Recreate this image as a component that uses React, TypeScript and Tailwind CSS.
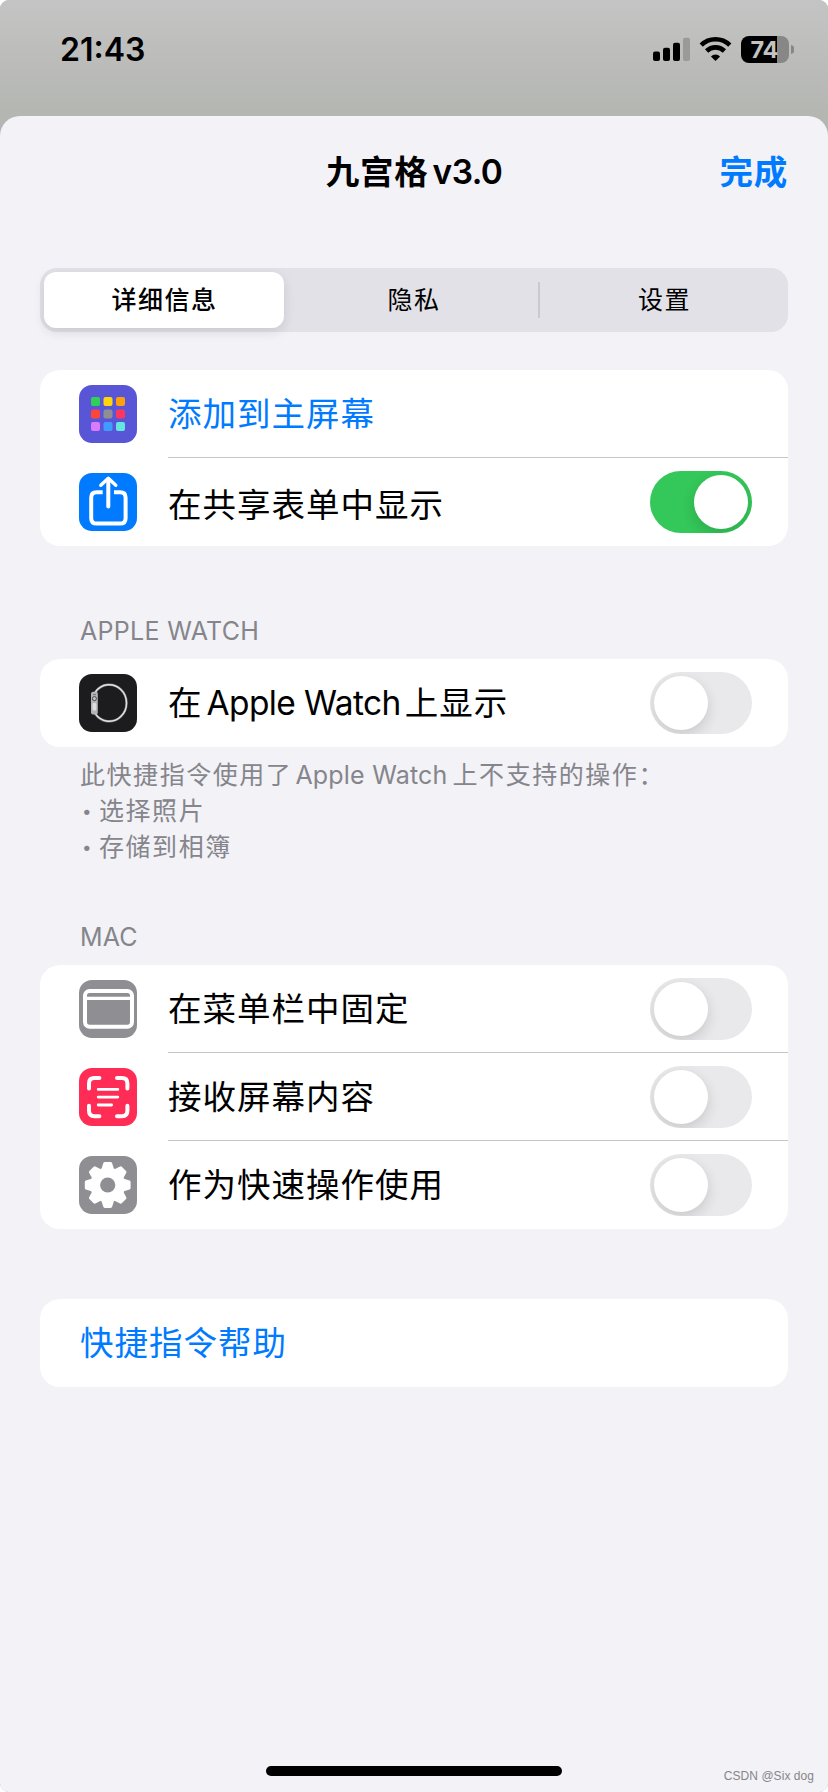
import React from "react";

const CJK = "font-['Inter','Noto_Sans_CJK_SC',sans-serif]";

function StatusBar() {
  return (
    <div className="flex h-[116px] items-start bg-linear-to-b from-[#c4c4c4] to-[#b4b6b2] pt-[36px] pl-[60px] pr-[34px]">
      <div className="mt-[-4px] text-[32px] leading-[36px] font-semibold tracking-[0px] text-black">21:43</div>
      <svg className="ml-auto" width="142" height="28" viewBox="0 0 142 28">
        <rect x="1" y="15.5" width="7" height="9.5" rx="2" />
        <rect x="11" y="11.7" width="7" height="13.3" rx="2" />
        <rect x="21" y="6.7" width="7" height="18.3" rx="2" />
        <rect x="31" y="1.7" width="7" height="23.3" rx="2" fill="#999a99" />
        <g fill="none" stroke="#000" strokeWidth="4.6">
          <path d="M49.2 9.1 A20.5 20.5 0 0 1 77.8 9.1" />
          <path d="M54.6 15 A12.7 12.7 0 0 1 72.4 15" />
        </g>
        <path d="M63.5 25 L58.9 20.4 A6.5 6.5 0 0 1 68.1 20.4 Z" />
        <path d="M97 0 H125 V27 H97 A8 8 0 0 1 89 19 V8 A8 8 0 0 1 97 0 Z" />
        <path d="M125 0 H129 A8 8 0 0 1 137 8 V19 A8 8 0 0 1 129 27 H125 Z" fill="#868786" />
        <path d="M139 9 A4.6 4.6 0 0 1 139 18 Z" fill="#868786" />
        <text x="98.5" y="22" fontFamily="Inter, sans-serif" fontWeight="700" fontSize="23.5" textLength="28" fill="#c3c3c3">74</text>
      </svg>
    </div>
  );
}

function Toggle({ on = false }: { on?: boolean }) {
  return (
    <div
      className={
        on
          ? "ml-auto mr-[36px] flex h-[62px] w-[102px] justify-end overflow-hidden rounded-full bg-[#34c759] p-[4px]"
          : "ml-auto mr-[36px] flex h-[62px] w-[102px] overflow-hidden rounded-full bg-[#e9e9eb] p-[4px]"
      }
    >
      <div className="size-[54px] rounded-full bg-white shadow-[0_5px_14px_rgba(0,0,0,0.14)]" />
    </div>
  );
}

function Tile({ color, children }: { color: string; children: React.ReactNode }) {
  return (
    <svg className="ml-[39px] mr-[33px] shrink-0" width="58" height="58" viewBox="0 0 58 58">
      <rect width="58" height="58" rx="13" fill={color} />
      {children}
    </svg>
  );
}

const gridColors = ["#30d158", "#ffd60a", "#ff9f0a", "#ff453a", "#8e8e93", "#ff375f", "#da7aff", "#409cff", "#64e6e0"];

function GridIcon() {
  return (
    <Tile color="#5856d6">
      {gridColors.map((c, i) => (
        <rect key={c} x={12 + (i % 3) * 12.5} y={12 + Math.floor(i / 3) * 12.5} width="9" height="9" rx="2" fill={c} />
      ))}
    </Tile>
  );
}

function ShareIcon() {
  return (
    <Tile color="#007aff">
      <g fill="none" stroke="#fff" strokeWidth="4">
        <path d="M23.7 19.2 H17.6 Q12.2 19.2 12.2 24.6 V45.2 Q12.2 50.6 17.6 50.6 H41.2 Q46.6 50.6 46.6 45.2 V24.6 Q46.6 19.2 41.2 19.2 H35" />
        <path d="M29.3 6 V33.5" strokeLinecap="round" />
        <path d="M21.8 12.3 L29.3 5.3 L36.8 12.3" strokeWidth="3.4" strokeLinecap="round" strokeLinejoin="round" />
      </g>
    </Tile>
  );
}

function WatchIcon() {
  return (
    <Tile color="#1c1c1e">
      <path d="M16.2 18.3 A17.3 18.3 0 1 1 16.2 39.7" fill="none" stroke="#777" strokeWidth="2.4" />
      <path d="M16.2 18.3 A17.3 18.3 0 1 1 16.2 39.7" fill="none" stroke="#e2e2e2" strokeWidth="1.4" />
      <rect x="12" y="17.7" width="6.8" height="22.8" rx="2" fill="#b4b4b4" />
      <rect x="13.5" y="28.8" width="3.8" height="8" rx="1.8" fill="#dedede" />
      <circle cx="15.4" cy="24.6" r="2" fill="#c8c8c8" stroke="#444" strokeWidth="1" />
      <path d="M14 20.6 H17" stroke="#777" strokeWidth="1" />
    </Tile>
  );
}

function MenuBarIcon() {
  return (
    <Tile color="#8e8e93">
      <rect x="6" y="11" width="47" height="35.7" rx="4.6" fill="none" stroke="#fff" strokeWidth="4" />
      <path d="M7 18.4 H52" stroke="#fff" strokeWidth="3.2" />
    </Tile>
  );
}

function ScreenIcon() {
  return (
    <Tile color="#ff2d55">
      <g fill="none" stroke="#fff" strokeWidth="4" strokeLinecap="round">
        <path d="M10 20.4 V15.4 Q10 10 15.4 10 H20.4" />
        <path d="M38 10 H43 Q48.4 10 48.4 15.4 V20.4" />
        <path d="M48.4 37.8 V42.8 Q48.4 48.2 43 48.2 H38" />
        <path d="M20.4 48.2 H15.4 Q10 48.2 10 42.8 V37.8" />
        <path d="M19.2 21.4 H38.8 M19.2 29.1 H38.8 M19.2 37 H32.6" strokeWidth="2.8" />
      </g>
    </Tile>
  );
}

const toothAngles = [0, 45, 90, 135, 180, 225, 270, 315];

function GearIcon() {
  return (
    <Tile color="#8e8e93">
      <g fill="#fff" stroke="#fff" strokeLinejoin="round" strokeWidth="3">
        <circle cx="28.7" cy="29" r="16" />
        {toothAngles.map((a) => (
          <path key={a} d="M23.7 14 L25.7 7.6 H31.7 L33.7 14 Z" transform={`rotate(${a} 28.7 29)`} />
        ))}
      </g>
      <circle cx="28.7" cy="29" r="7.6" fill="#8e8e93" />
    </Tile>
  );
}

const label = "text-[33.5px] leading-[48px] tracking-[1px] whitespace-nowrap";

function Row({ icon, children, divider = false, toggle }: { icon: React.ReactNode; children: React.ReactNode; divider?: boolean; toggle?: "on" | "off" }) {
  return (
    <div className="flex h-[88px] items-center">
      {icon}
      <div className={divider ? "-ml-[2px] flex h-full flex-1 items-center border-b border-[#c6c6c8]" : "-ml-[2px] flex h-full flex-1 items-center"}>
        {children}
        {toggle && <Toggle on={toggle === "on"} />}
      </div>
    </div>
  );
}

export default function App() {
  return (
    <div className="h-[1792px] w-[828px] bg-white">
      <div className={`flex h-full flex-col overflow-hidden rounded-[9px] bg-[#b4b6b2] ${CJK}`} lang="zh-CN">
        <StatusBar />
        <div className="flex flex-1 flex-col rounded-t-[20px] bg-[#f2f2f7] px-[40px]">
          <div className="grid h-[152px] grid-cols-[1fr_auto_1fr] items-start pt-[32px] text-[33.5px] leading-[48px] font-bold">
            <span />
            <h1 className="flex text-black">
              <span className="tracking-[0.8px]">九宫格</span>
              <span className="ml-[4px] font-semibold tracking-[-0.6px]">v3.0</span>
            </h1>
            <span className="text-right tracking-[0.8px] text-[#007aff]">完成</span>
          </div>

          <div className="flex h-[64px] items-center rounded-[17px] bg-[#e2e1e7] p-[4px] text-[25px] leading-[36px] tracking-[1.5px] text-black">
            <div className="flex h-[56px] w-[240px] items-center justify-center rounded-[12px] bg-white pl-[1px] font-medium shadow-[0_4px_12px_rgba(0,0,0,0.11)]">详细信息</div>
            <div className="flex h-[36px] w-[256px] items-center justify-center border-r-2 border-[#cacace] pl-[6px]">隐私</div>
            <div className="flex flex-1 items-center justify-center pl-[5px]">设置</div>
          </div>

          <div className="mt-[38px] h-[176px] rounded-[20px] bg-white">
            <Row icon={<GridIcon />} divider>
              <span className={`${label} text-[#007aff]`}>添加到主屏幕</span>
            </Row>
            <Row icon={<ShareIcon />} toggle="on">
              <span className={`${label} mt-[6px]`}>在共享表单中显示</span>
            </Row>
          </div>

          <div className="mt-[67px] pl-[40px] text-[25px] leading-[36px] tracking-[0.3px] text-[#85858b]">APPLE WATCH</div>
          <div className="mt-[10px] rounded-[20px] bg-white">
            <Row icon={<WatchIcon />} toggle="off">
              <span className={`${label} flex`}>
                <span>在</span>
                <span className="ml-[4px] mr-[4px] tracking-[-0.6px]">Apple Watch</span>
                <span>上显示</span>
              </span>
            </Row>
          </div>
          <div className="mt-[10px] pl-[40px] text-[25px] leading-[36px] tracking-[1.55px] text-[#85858b]">
            <div className="flex whitespace-nowrap">
              <span>此快捷指令使用了</span>
              <span className="ml-[3px] mr-[5px] tracking-[0.2px]">Apple Watch</span>
              <span>上不支持的操作：</span>
            </div>
            <div className="flex">
              <span className="w-[19px] pl-[2px] text-[17px]">•</span>
              <span>选择照片</span>
            </div>
            <div className="flex">
              <span className="w-[19px] pl-[2px] text-[17px]">•</span>
              <span>存储到相簿</span>
            </div>
          </div>

          <div className="mt-[54px] pl-[40px] text-[25px] leading-[36px] tracking-[0.1px] text-[#85858b]">MAC</div>
          <div className="mt-[10px] rounded-[20px] bg-white">
            <Row icon={<MenuBarIcon />} divider toggle="off">
              <span className={label}>在菜单栏中固定</span>
            </Row>
            <Row icon={<ScreenIcon />} divider toggle="off">
              <span className={label}>接收屏幕内容</span>
            </Row>
            <Row icon={<GearIcon />} toggle="off">
              <span className={label}>作为快速操作使用</span>
            </Row>
          </div>

          <div className="mt-[70px] flex h-[88px] items-center rounded-[20px] bg-white pl-[40px]">
            <span className={`${label} text-[#007aff]`}>快捷指令帮助</span>
          </div>

          <div className="mt-auto flex h-[26px] items-start">
            <div className="ml-[226px] h-[10px] w-[296px] rounded-full bg-black" />
            <span className="-mr-[26px] ml-auto font-['Liberation_Sans',sans-serif] text-[12px] leading-[20px] tracking-[0.05px] whitespace-nowrap text-[#868689]">CSDN @Six dog</span>
          </div>
        </div>
      </div>
    </div>
  );
}
